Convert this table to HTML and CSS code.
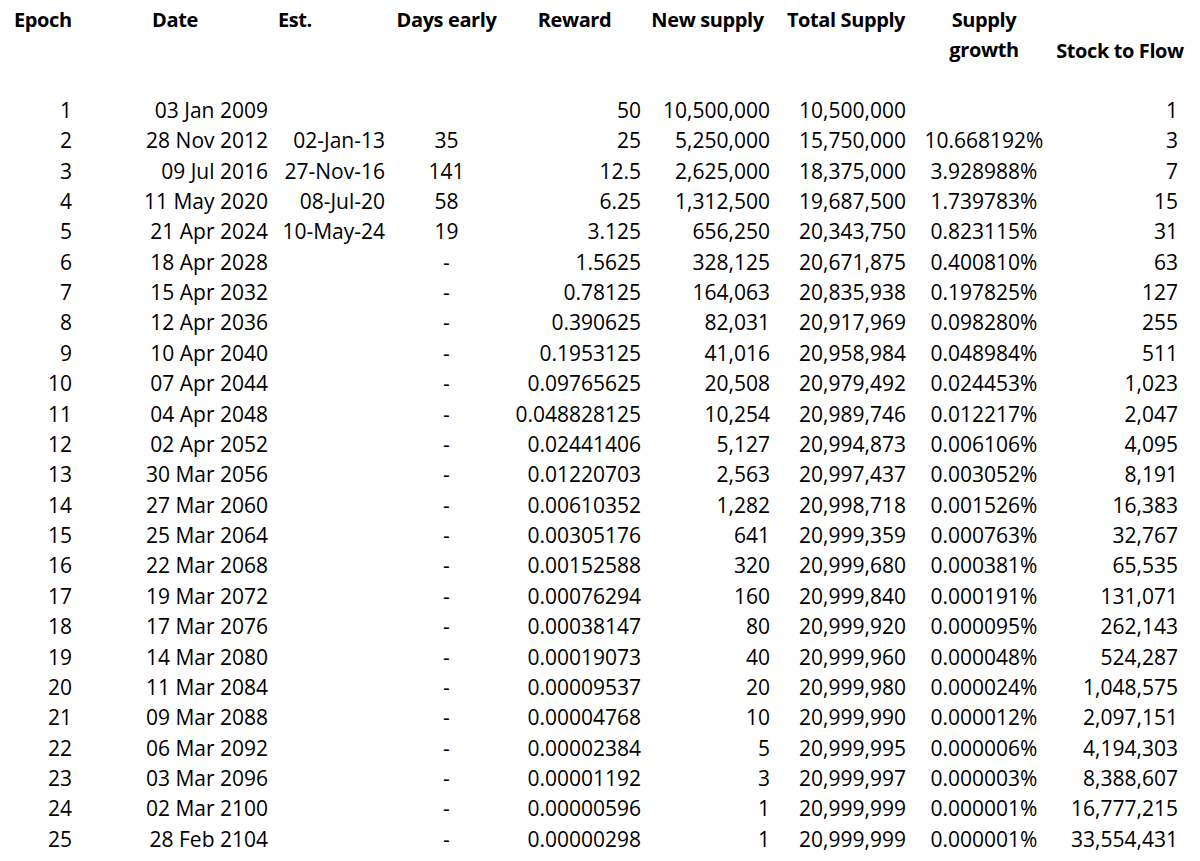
FILE: index.html
```html
<!DOCTYPE html>
<html lang="en">
<head>
<meta charset="utf-8">
<title>Bitcoin halving epochs</title>
<link rel="stylesheet" href="styles.css">
</head>
<body>
<div class="sheet">
  <div class="row head">
    <div class="th th-epoch">Epoch</div>
    <div class="th th-date">Date</div>
    <div class="th th-est">Est.</div>
    <div class="th">Days early</div>
    <div class="th">Reward</div>
    <div class="th th-new">New supply</div>
    <div class="th">Total Supply</div>
    <div class="th">Supply<br>growth</div>
    <div class="th th-s2f">Stock to Flow</div>
  </div>

  <div class="row"><div>1</div><div>03 Jan 2009</div><div></div><div class="c"></div><div>50</div><div>10,500,000</div><div>10,500,000</div><div class="c"></div><div>1</div></div>
  <div class="row"><div>2</div><div>28 Nov 2012</div><div>02-Jan-13</div><div class="c">35</div><div>25</div><div>5,250,000</div><div>15,750,000</div><div class="c">10.668192%</div><div>3</div></div>
  <div class="row"><div>3</div><div>09 Jul 2016</div><div>27-Nov-16</div><div class="c">141</div><div>12.5</div><div>2,625,000</div><div>18,375,000</div><div class="c">3.928988%</div><div>7</div></div>
  <div class="row"><div>4</div><div>11 May 2020</div><div>08-Jul-20</div><div class="c">58</div><div>6.25</div><div>1,312,500</div><div>19,687,500</div><div class="c">1.739783%</div><div>15</div></div>
  <div class="row"><div>5</div><div>21 Apr 2024</div><div>10-May-24</div><div class="c">19</div><div>3.125</div><div>656,250</div><div>20,343,750</div><div class="c">0.823115%</div><div>31</div></div>
  <div class="row"><div>6</div><div>18 Apr 2028</div><div></div><div class="c">-</div><div>1.5625</div><div>328,125</div><div>20,671,875</div><div class="c">0.400810%</div><div>63</div></div>
  <div class="row"><div>7</div><div>15 Apr 2032</div><div></div><div class="c">-</div><div>0.78125</div><div>164,063</div><div>20,835,938</div><div class="c">0.197825%</div><div>127</div></div>
  <div class="row"><div>8</div><div>12 Apr 2036</div><div></div><div class="c">-</div><div>0.390625</div><div>82,031</div><div>20,917,969</div><div class="c">0.098280%</div><div>255</div></div>
  <div class="row"><div>9</div><div>10 Apr 2040</div><div></div><div class="c">-</div><div>0.1953125</div><div>41,016</div><div>20,958,984</div><div class="c">0.048984%</div><div>511</div></div>
  <div class="row"><div>10</div><div>07 Apr 2044</div><div></div><div class="c">-</div><div>0.09765625</div><div>20,508</div><div>20,979,492</div><div class="c">0.024453%</div><div>1,023</div></div>
  <div class="row"><div>11</div><div>04 Apr 2048</div><div></div><div class="c">-</div><div>0.048828125</div><div>10,254</div><div>20,989,746</div><div class="c">0.012217%</div><div>2,047</div></div>
  <div class="row"><div>12</div><div>02 Apr 2052</div><div></div><div class="c">-</div><div>0.02441406</div><div>5,127</div><div>20,994,873</div><div class="c">0.006106%</div><div>4,095</div></div>
  <div class="row"><div>13</div><div>30 Mar 2056</div><div></div><div class="c">-</div><div>0.01220703</div><div>2,563</div><div>20,997,437</div><div class="c">0.003052%</div><div>8,191</div></div>
  <div class="row"><div>14</div><div>27 Mar 2060</div><div></div><div class="c">-</div><div>0.00610352</div><div>1,282</div><div>20,998,718</div><div class="c">0.001526%</div><div>16,383</div></div>
  <div class="row"><div>15</div><div>25 Mar 2064</div><div></div><div class="c">-</div><div>0.00305176</div><div>641</div><div>20,999,359</div><div class="c">0.000763%</div><div>32,767</div></div>
  <div class="row"><div>16</div><div>22 Mar 2068</div><div></div><div class="c">-</div><div>0.00152588</div><div>320</div><div>20,999,680</div><div class="c">0.000381%</div><div>65,535</div></div>
  <div class="row"><div>17</div><div>19 Mar 2072</div><div></div><div class="c">-</div><div>0.00076294</div><div>160</div><div>20,999,840</div><div class="c">0.000191%</div><div>131,071</div></div>
  <div class="row"><div>18</div><div>17 Mar 2076</div><div></div><div class="c">-</div><div>0.00038147</div><div>80</div><div>20,999,920</div><div class="c">0.000095%</div><div>262,143</div></div>
  <div class="row"><div>19</div><div>14 Mar 2080</div><div></div><div class="c">-</div><div>0.00019073</div><div>40</div><div>20,999,960</div><div class="c">0.000048%</div><div>524,287</div></div>
  <div class="row"><div>20</div><div>11 Mar 2084</div><div></div><div class="c">-</div><div>0.00009537</div><div>20</div><div>20,999,980</div><div class="c">0.000024%</div><div>1,048,575</div></div>
  <div class="row"><div>21</div><div>09 Mar 2088</div><div></div><div class="c">-</div><div>0.00004768</div><div>10</div><div>20,999,990</div><div class="c">0.000012%</div><div>2,097,151</div></div>
  <div class="row"><div>22</div><div>06 Mar 2092</div><div></div><div class="c">-</div><div>0.00002384</div><div>5</div><div>20,999,995</div><div class="c">0.000006%</div><div>4,194,303</div></div>
  <div class="row"><div>23</div><div>03 Mar 2096</div><div></div><div class="c">-</div><div>0.00001192</div><div>3</div><div>20,999,997</div><div class="c">0.000003%</div><div>8,388,607</div></div>
  <div class="row"><div>24</div><div>02 Mar 2100</div><div></div><div class="c">-</div><div>0.00000596</div><div>1</div><div>20,999,999</div><div class="c">0.000001%</div><div>16,777,215</div></div>
  <div class="row"><div>25</div><div>28 Feb 2104</div><div></div><div class="c">-</div><div>0.00000298</div><div>1</div><div>20,999,999</div><div class="c">0.000001%</div><div>33,554,431</div></div>
</div>
</body>
</html>
```

FILE: styles.css
```css
html, body {
  margin: 0;
  padding: 0;
  background: #ffffff;
}

body {
  font-family: "Open Sans", "Noto Sans", sans-serif;
  font-size: 21px;
  color: #000000;
}

.sheet {
  padding-top: 3.7px;
}

.row {
  display: grid;
  grid-template-columns: 80px 196px 117px 107px 149px 129px 136px 140px 132px;
  height: 30.375px;
  line-height: 30.375px;
  white-space: nowrap;
}

.row > div {
  text-align: right;
  padding-right: 8px;
}

.row > div.c {
  text-align: center;
  padding-right: 0;
}

.row.head {
  height: 60.75px;
  margin-bottom: 30.375px;
  font-weight: 700;
  font-size: 20px;
  letter-spacing: -0.4px;
}

.row.head > .th {
  text-align: center;
  padding-right: 0;
  padding-top: 1px;
  align-self: start;
}

.row.head > .th-epoch {
  text-align: left;
  padding-left: 14px;
}

.row.head > .th-date {
  padding-right: 6px;
}

.row.head > .th-est {
  text-align: left;
  padding-left: 2px;
}

.row.head > .th-new {
  padding-right: 12px;
}

.row.head > .th-s2f {
  align-self: end;
  padding-top: 0;
  margin-bottom: -1px;
}
```
